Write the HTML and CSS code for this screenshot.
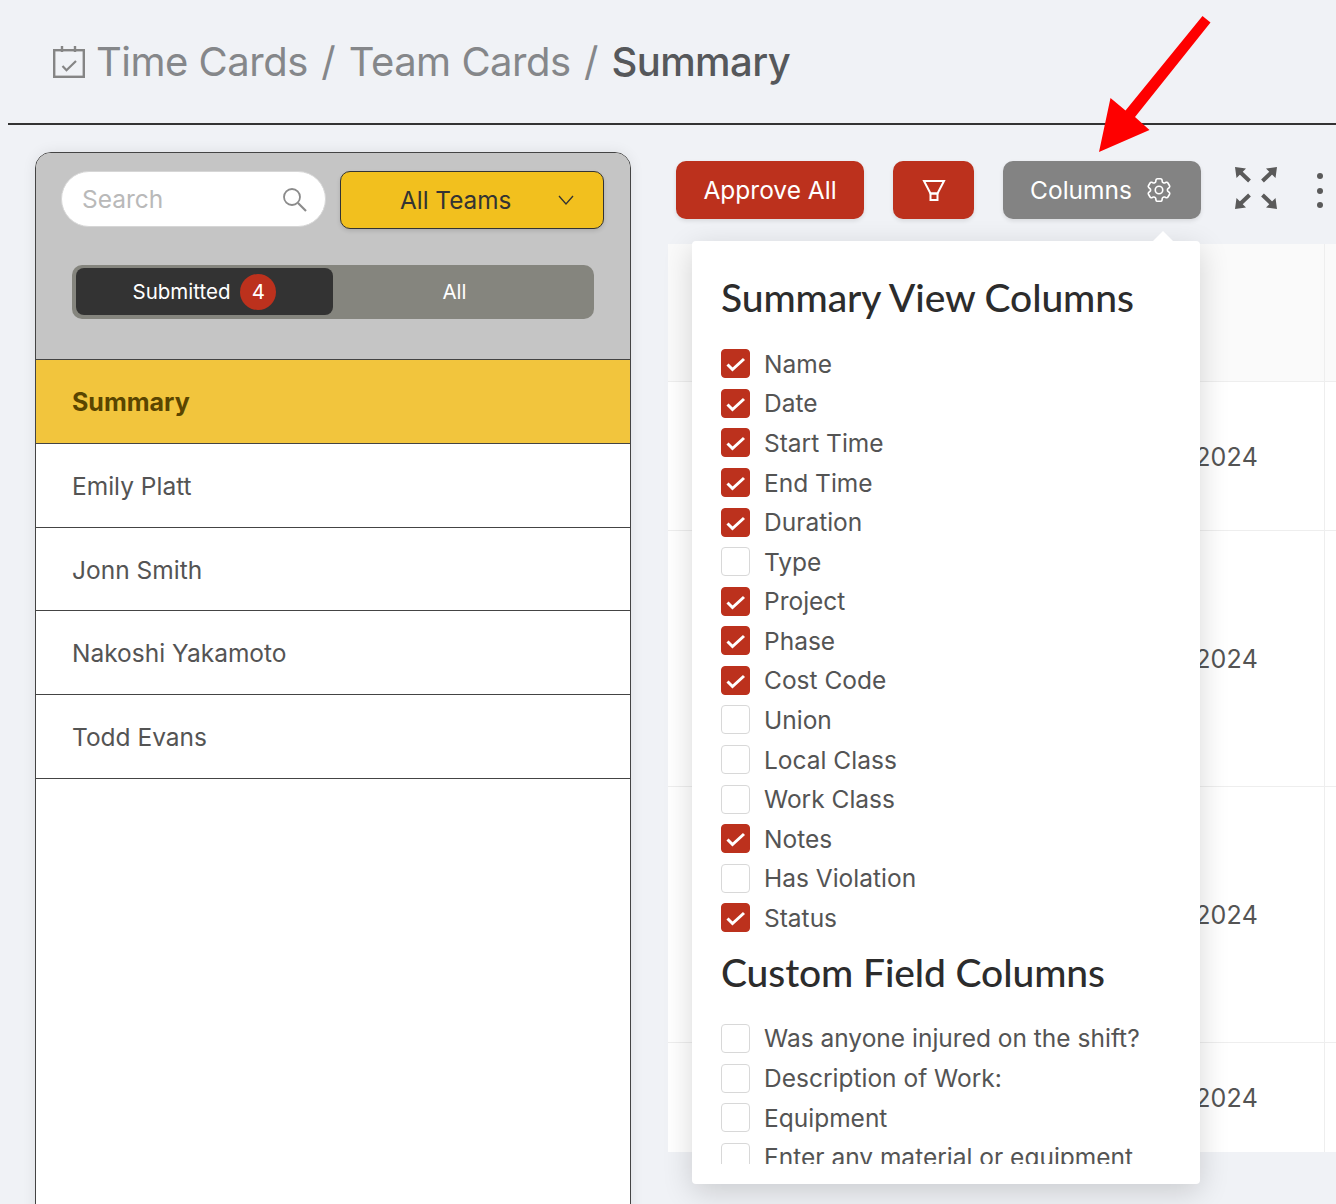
FILE: index.html
```html
<!DOCTYPE html>
<html lang="en">
<head>
<meta charset="utf-8">
<title>Summary</title>
<link rel="stylesheet" href="styles.css">
</head>
<body>
<header class="page-header">
  <svg class="crumb-icon" width="32" height="32" viewBox="0 0 32 32" fill="none" stroke="#858585" stroke-width="2.400"><rect x="1.200" y="4.200" width="29.600" height="26.600"/><path d="M9 0v6M22 0v6"/><path d="M9.500 20l4 4.200L23 15" stroke-width="2.200"/></svg>
  <span class="crumb">Time Cards</span><span class="crumb sep">/</span><span class="crumb">Team Cards</span><span class="crumb sep">/</span><span class="crumb current">Summary</span>
</header>
<div class="content">
  <aside class="panel">
    <div class="panel-top">
      <div class="filters">
        <div class="search"><span>Search</span>
          <svg width="26" height="26" viewBox="0 0 26 26" fill="none" stroke="#8b8b8b" stroke-width="1.800"><circle cx="11" cy="11" r="8"/><path d="M17 17l8 8" stroke-width="2.200"/></svg>
        </div>
        <div class="team-select"><span>All Teams</span>
          <svg width="16" height="12" viewBox="0 0 16 12" fill="none" stroke="#333" stroke-width="1.300"><path d="M1 2l7 8 7-8"/></svg>
        </div>
      </div>
      <div class="segments">
        <div class="segment active">Submitted <b class="badge">4</b></div>
        <div class="segment">All</div>
      </div>
    </div>
    <div class="person selected">Summary</div>
    <div class="person">Emily Platt</div>
    <div class="person">Jonn Smith</div>
    <div class="person">Nakoshi Yakamoto</div>
    <div class="person">Todd Evans</div>
  </aside>
  <main class="main">
    <div class="toolbar">
      <button class="btn red approve">Approve All</button>
      <button class="btn red filter"><svg width="24" height="24" viewBox="0 0 24 24" fill="none" stroke="#fff" stroke-width="2"><path d="M2 3h20l-6.500 12.500h-7z"/><path d="M8.500 15.500h7v6.500h-7z"/></svg></button>
      <button class="btn gray columns">Columns
        <svg width="30" height="30" viewBox="0 0 24 24" fill="none" stroke="#fff" stroke-width="1.300"><path d="M9.594 3.940c.09-.542.56-.94 1.110-.94h2.593c.55 0 1.020.398 1.110.94l.213 1.281c.063.374.313.686.645.870.074.040.147.083.220.127.325.196.720.257 1.075.124l1.217-.456a1.125 1.125 0 0 1 1.370.490l1.296 2.247a1.125 1.125 0 0 1-.260 1.431l-1.003.827c-.293.241-.438.613-.430.992a7.723 7.723 0 0 1 0 .255c-.008.378.137.750.430.991l1.004.827c.424.350.534.955.260 1.430l-1.298 2.247a1.125 1.125 0 0 1-1.369.491l-1.217-.456c-.355-.133-.750-.072-1.076.124a6.470 6.470 0 0 1-.220.128c-.331.183-.581.495-.644.869l-.213 1.281c-.09.543-.56.940-1.110.940h-2.594c-.55 0-1.019-.398-1.110-.940l-.213-1.281c-.062-.374-.312-.686-.644-.870a6.520 6.520 0 0 1-.220-.127c-.325-.196-.720-.257-1.076-.124l-1.217.456a1.125 1.125 0 0 1-1.369-.490l-1.297-2.247a1.125 1.125 0 0 1 .260-1.431l1.004-.827c.292-.240.437-.613.430-.991a6.932 6.932 0 0 1 0-.255c.007-.380-.138-.751-.430-.992l-1.004-.827a1.125 1.125 0 0 1-.260-1.430l1.297-2.247a1.125 1.125 0 0 1 1.370-.491l1.216.456c.356.133.751.072 1.076-.124.072-.044.146-.086.220-.128.332-.183.582-.495.644-.869l.214-1.280Z"/><circle cx="12" cy="12" r="3"/></svg>
      </button>
      <svg class="expand" width="44" height="44" viewBox="0 0 44 44" fill="#5a5a5a"><path d="M1 1l11 1.500-9.500 9.500zM43 1L32 2.500l9.500 9.500zM1 43l11-1.500L2.500 32zM43 43l-11-1.500 9.500-9.500z"/><path d="M5 5l10.500 10M39 5L28.500 15M5 39l10.500-10M39 39L28.500 29" fill="none" stroke="#5a5a5a" stroke-width="4"/></svg>
      <div class="dots"><i></i><i></i><i></i></div>
    </div>
    <div class="table">
      <div class="t-row head"></div>
      <div class="t-row r1"><span>2024</span></div>
      <div class="t-row r2"><span>2024</span></div>
      <div class="t-row r2"><span>2024</span></div>
      <div class="t-row r4"><span>2024</span></div>
    </div>
  </main>
</div>
<section class="popup">
  <h2>Summary View Columns</h2>
  <ul class="checks">
    <li class="on">Name</li><li class="on">Date</li><li class="on">Start Time</li><li class="on">End Time</li><li class="on">Duration</li><li>Type</li><li class="on">Project</li><li class="on">Phase</li><li class="on">Cost Code</li><li>Union</li><li>Local Class</li><li>Work Class</li><li class="on">Notes</li><li>Has Violation</li><li class="on">Status</li>
  </ul>
  <h2 class="second">Custom Field Columns</h2>
  <ul class="checks clipped">
    <li>Was anyone injured on the shift?</li><li>Description of Work:</li><li>Equipment</li><li>Enter any material or equipment</li>
  </ul>
</section>
<svg class="arrow" width="130" height="150" viewBox="0 0 130 150"><path fill="#fe0000" d="M111.500 0l8 6.500L44 101l14.500 13L8 136l11.500-54 15 12.500z"/></svg>
</body>
</html>
```
FILE: styles.css
```css
*, *::before, *::after { box-sizing: border-box; }
html, body { margin: 0; height: 1204px; overflow: hidden; }
body { background: #f0f2f6; font-family: Inter, "Liberation Sans", sans-serif; color: #545454; position: relative; }
ul { list-style: none; margin: 0; padding: 0; }
button { font: inherit; border: 0; }

.page-header { margin-left: 8px; height: 125px; border-bottom: 2px solid #333; display: flex; align-items: center; padding-left: 45px; font-size: 40px; letter-spacing: -.5px; color: #85878a; }
.crumb-icon { margin-right: 11px; margin-top: 1px; }
.sep { margin: 0 13.500px; }
.current { color: #56585b; font-weight: 500; letter-spacing: -.6px; }

.content { display: flex; padding: 27px 0 0 35px; gap: 37px; }
.panel { width: 596px; height: 1100px; flex: none; background: #fff; border: 1px solid #444; border-radius: 16px; overflow: hidden; box-shadow: 0 0 14px rgba(0,0,0,.08); }
.panel-top { height: 206px; background: #c5c5c5; padding: 18px 26px 0 25px; }
.filters { display: flex; gap: 14px; }
.search { width: 265px; height: 56px; background: #fff; border: 1px solid #d6d6d6; border-radius: 28px; display: flex; align-items: center; justify-content: space-between; padding: 0 18px 0 20px; font-size: 24.500px; color: #b9b9b9; }
.team-select { width: 264px; height: 58px; background: #f2c01e; border: 1px solid #333; border-radius: 10px; display: flex; align-items: center; justify-content: space-between; padding: 0 29px 0 59px; font-size: 24.300px; color: #333; box-shadow: 0 2px 4px rgba(0,0,0,.12); }
.segments { margin: 36px 10px 0 11px; height: 54px; background: #85857e; border-radius: 10px; display: flex; padding: 3px 18px 4px 4px; }
.segment { flex: 1; display: flex; align-items: center; justify-content: center; gap: 10px; color: #fff; font-size: 20.500px; }
.segment.active { flex: none; width: 257px; background: #333; border-radius: 8px; }
.badge { width: 36px; height: 36px; border-radius: 50%; background: #bc311d; display: flex; align-items: center; justify-content: center; font-weight: 400; }

.person { height: 83.700px; border-bottom: 1px solid #444; display: flex; align-items: center; padding: 1px 0 0 36px; font-size: 24.500px; }
.person.selected { background: #f2c53d; color: #5a4500; font-weight: 700; font-size: 25px; border-top: 1px solid #444; height: 85px; padding-top: 0; }

.main { flex: 1; min-width: 0; }
.toolbar { display: flex; align-items: flex-start; padding: 9px 0 0 8px; height: 92px; position: relative; }
.btn { height: 58px; border-radius: 10px; color: #fff; font-size: 24.500px; display: flex; align-items: center; justify-content: center; box-shadow: 0 2px 4px rgba(0,0,0,.1); }
.red { background: #bc311d; }
.gray { background: #838383; }
.approve { width: 188px; margin-right: 29px; }
.filter { width: 81px; margin-right: 29px; }
.columns { width: 198px; gap: 12px; margin-right: 33px; }
.expand { margin-top: 5px; }
.dots { margin: 12px 0 0 39px; display: flex; flex-direction: column; gap: 8.500px; }
.dots i { width: 6px; height: 6px; border-radius: 50%; background: #5a5a5a; }

.table { background: #fff; height: 908px; position: relative; }
.t-row { border-bottom: 1px solid #eee; display: flex; align-items: center; justify-content: flex-end; padding: 0 78px 0 0; font-size: 25px; letter-spacing: .2px; position: relative; }
.t-row::after { content: ""; position: absolute; right: 11px; top: 0; bottom: 0; border-left: 1px solid #eee; }
.head { height: 138px; background: #fafafa; }
.r1 { height: 149px; padding-top: 1px; }
.r2 { height: 256px; }
.r4 { height: 109px; border-bottom: 0; }

.popup { position: absolute; left: 692px; top: 241px; width: 508px; height: 943px; background: #fff; border-radius: 4px; padding: 33px 29px 0; box-shadow: 0 8px 30px rgba(0,0,0,.16); }
.popup::before { content: ""; position: absolute; right: 27px; top: -10px; border: 10px solid transparent; border-top: 0; border-bottom-color: #fff; }
.popup h2 { margin: 0 0 24px; font-family: Lato, sans-serif; font-weight: 500; font-size: 39px; line-height: 46px; color: #2c2c2c; letter-spacing: -.1px; }
.popup .second { margin: 11px 0 24px; }
.checks li { height: 39.580px; display: flex; align-items: center; gap: 14px; font-size: 24.500px; white-space: nowrap; }
.checks li::before { content: ""; flex: none; width: 29px; height: 29px; border: 1px solid #d8d8d8; border-radius: 4px; background: #fff; }
.checks li.on::before { border-color: #bc311d; background: #bc311d url("data:image/svg+xml,%3Csvg xmlns='http://www.w3.org/2000/svg' viewBox='0 0 27 27'%3E%3Cpath d='M5.500 14.500l5 5L22 9' fill='none' stroke='%23fff' stroke-width='3'/%3E%3C/svg%3E") center/100% no-repeat; }
.clipped { height: 145px; overflow: hidden; }

.arrow { position: absolute; left: 1091px; top: 16px; }
```
